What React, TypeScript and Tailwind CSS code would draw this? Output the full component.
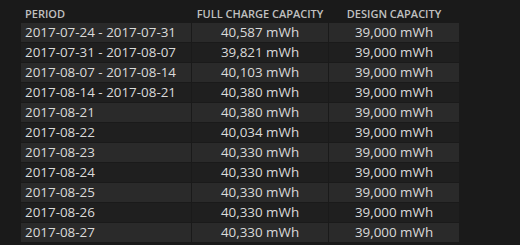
import React from 'react';

const rows: [string, string][] = [
  ['2017-07-24 - 2017-07-31', '40,587 mWh'],
  ['2017-07-31 - 2017-08-07', '39,821 mWh'],
  ['2017-08-07 - 2017-08-14', '40,103 mWh'],
  ['2017-08-14 - 2017-08-21', '40,380 mWh'],
  ['2017-08-21', '40,380 mWh'],
  ['2017-08-22', '40,034 mWh'],
  ['2017-08-23', '40,330 mWh'],
  ['2017-08-24', '40,330 mWh'],
  ['2017-08-25', '40,330 mWh'],
  ['2017-08-26', '40,330 mWh'],
  ['2017-08-27', '40,330 mWh'],
];

const App: React.FC = () => {
  return (
    <div className="min-h-screen h-[245px] overflow-hidden bg-[#1a1a1a] pl-[21px] font-['Open_Sans',sans-serif]">
      {/* Header */}
      <div className="grid grid-cols-[170px_136px_130px] gap-x-px h-[23px] text-[11px] font-semibold text-[#c0c0c0] uppercase">
        <div className="pl-[4px] pt-[6px]">Period</div>
        <div className="text-center pt-[6px] whitespace-nowrap">Full Charge Capacity</div>
        <div className="text-center pt-[6px] whitespace-nowrap">Design Capacity</div>
      </div>

      {/* Rows */}
      <div className="flex flex-col gap-y-px">
        {rows.map(([period, full], i) => {
          const cell = i % 2 === 0 ? 'bg-[#2a2a2a]' : 'bg-[#1f1f1f]';
          return (
            <div key={i} className="grid grid-cols-[170px_136px_130px] gap-x-px h-[19px] text-[13.4px] leading-[19px] text-[#dadada]">
              <div className={`${cell} pl-[4px] whitespace-nowrap`}>{period}</div>
              <div className={`${cell} text-center whitespace-nowrap`}>{full}</div>
              <div className={`${cell} text-center whitespace-nowrap`}>39,000 mWh</div>
            </div>
          );
        })}
      </div>
    </div>
  );
};

export default App;
